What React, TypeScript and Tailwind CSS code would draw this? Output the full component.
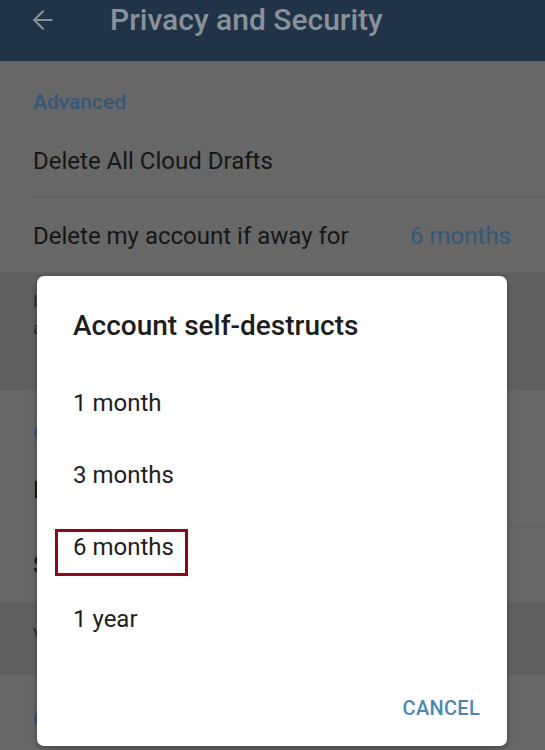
import { ArrowLeft } from 'lucide-react'

const options = ['1 month', '3 months', '6 months', '1 year']

function Row({ label, value, divider, h }: { label: string; value?: string; divider?: boolean; h: string }) {
  return (
    <div className="pl-[33px]">
      <div className={`flex items-center justify-between pr-[34px] ${h} ${divider ? 'border-b border-[#5e5e5e]' : ''}`}>
        <span className="text-[24px] text-[#161616]">{label}</span>
        {value && <span className="text-[24px] text-[#33597a]">{value}</span>}
      </div>
    </div>
  )
}

export default function App() {
  return (
    <div className="relative h-[750px] w-[545px] overflow-hidden bg-[#676767] font-['Roboto',sans-serif]">
      <header className="flex h-[61px] items-start bg-[#213447] pt-[2px]">
        <ArrowLeft className="ml-[28px] mt-[3px] h-[30px] w-[30px] text-[#8a9299]" strokeWidth={1.6} />
        <h1 className="ml-[52px] text-[30px] font-medium leading-[36px] text-[#8a9299]">Privacy and Security</h1>
      </header>

      <div className="flex h-[68px] items-end pb-[14px] pl-[33px]">
        <span className="text-[21px] font-medium leading-[26px] text-[#33597a]">Advanced</span>
      </div>
      <Row label="Delete All Cloud Drafts" divider h="h-[68px] pb-[4px]" />
      <Row label="Delete my account if away for" value="6 months" h="h-[75px] pt-[2px]" />

      <div className="h-[118px] bg-[#606060] pl-[33px] pr-[30px] pt-[16px] text-[17px] leading-[27px] text-[#2a2a2a]">
        If you do not come online at least once within this period, your account will be deleted along with all
        messages and contacts.
      </div>

      <div className="flex h-[60px] items-end pb-[4px] pl-[33px]">
        <span className="text-[21px] font-medium leading-[26px] text-[#33597a]">Contacts</span>
      </div>
      <Row label="Delete Synced Contacts" divider h="h-[77px] pt-[4px]" />
      <Row label="Sync Contacts" h="h-[76px]" />
      <div className="h-[72px] bg-[#606060] pl-[33px] pr-[30px] pt-[18px] text-[17px] leading-[27px] text-[#2a2a2a]">
        View the list of contacts imported from your device.
      </div>
      <div className="pl-[33px] pt-[31px]">
        <span className="text-[21px] font-medium leading-[26px] text-[#33597a]">Chats</span>
      </div>

      <div className="absolute left-[37px] top-[276px] h-[470px] w-[470px] rounded-[7px] bg-white shadow-[0_2px_6px_rgba(0,0,0,0.35)]">
        <h2 className="pl-[36px] pt-[32px] text-[28px] font-medium leading-[36px] text-[#1e1e1e]">Account self-destructs</h2>
        <ul className="mt-[23px]">
          {options.map((o) => (
            <li key={o} className="relative flex h-[72px] items-center pl-[36px] text-[24px] text-[#1e1e1e]">
              {o === '6 months' && (
                <span className="absolute left-[18px] top-[18px] h-[47px] w-[133px] border-[3px] border-[#8b0a1a]" />
              )}
              <span className="relative">{o}</span>
            </li>
          ))}
        </ul>
        <div className="mt-[33px] flex justify-end pr-[27px]">
          <button className="h-[40px] text-[20px] font-medium tracking-[0.3px] text-[#4a88b4]">CANCEL</button>
        </div>
      </div>
    </div>
  )
}
